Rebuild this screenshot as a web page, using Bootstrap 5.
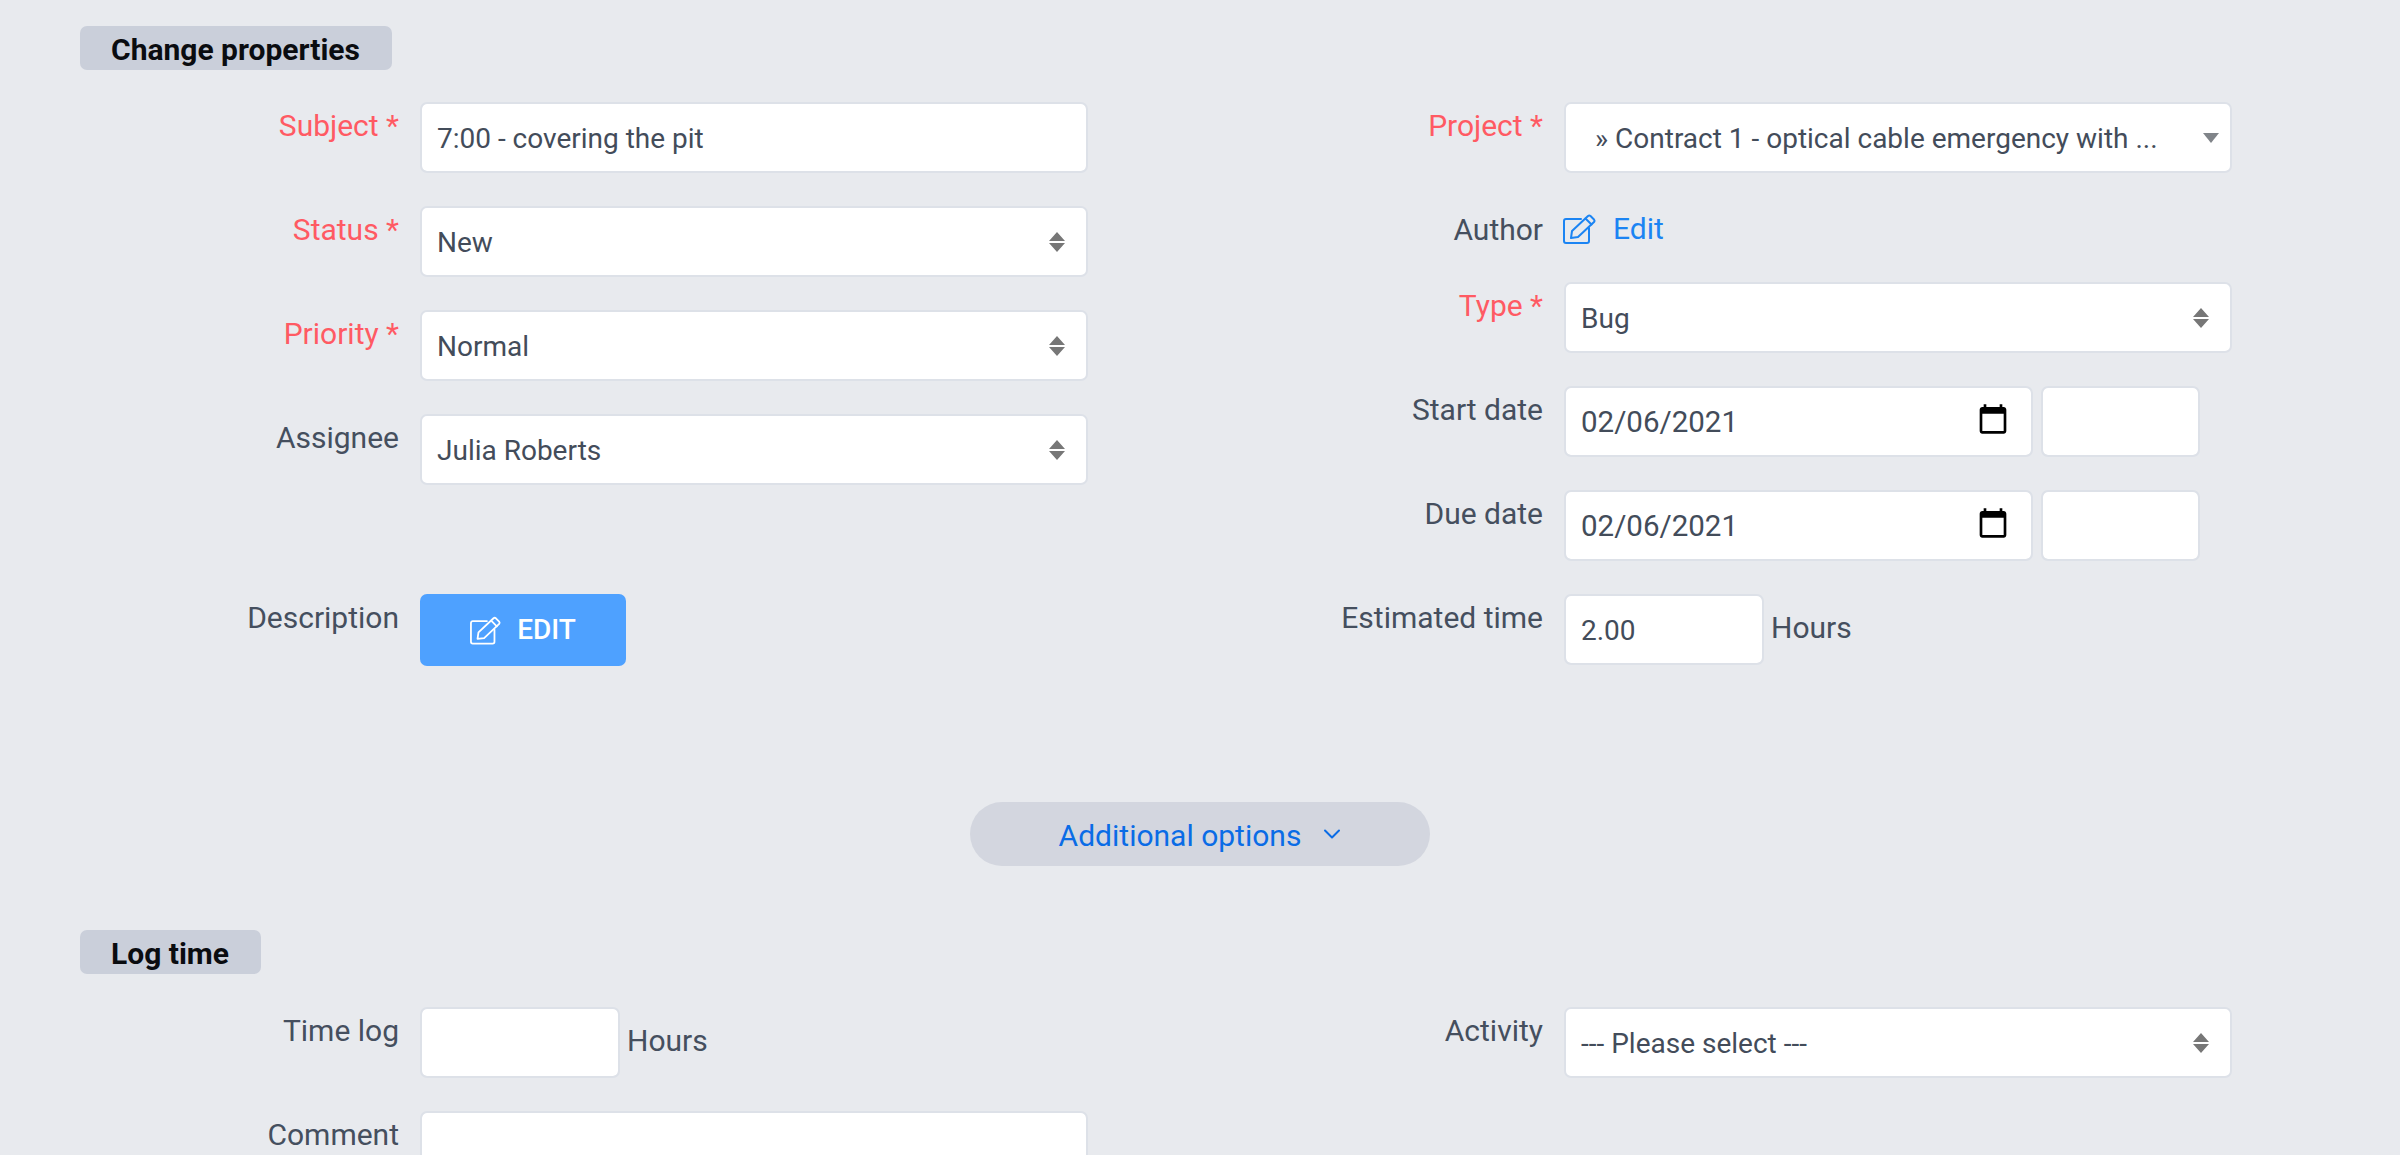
<!DOCTYPE html>
<html lang="en">
<head>
<meta charset="utf-8">
<title>Change properties</title>
<link href="https://cdn.jsdelivr.net/npm/bootstrap@5.3.0/dist/css/bootstrap.min.css" rel="stylesheet">
<style>
html,body{height:1155px;overflow:hidden;}
body{background:#e8eaee;font-family:Roboto,"Liberation Sans",sans-serif;font-size:30px;color:#454f5e;}
.page-wrap{padding:26px 32px 0 80px;height:1155px;overflow:hidden;}
.sec-tag{display:inline-block;background:#cacfda;color:#0a0c10;font-weight:700;font-size:30px;line-height:48px;height:44px;padding:0 32px 0 31px;border-radius:7px;}
.sec-head{margin-bottom:32px;height:44px;}
.frow{display:flex;margin-bottom:33px;}
.flabel{width:319px;margin-right:21px;text-align:right;height:43px;line-height:48px;flex:none;}
.flabel.req{color:#ff5a63;}
.fctl.form-control,.fctl.form-select{height:71px;border:2px solid #dde1e8;border-radius:7px;font-size:28px;color:#434c5a;padding:2px 15px 0;line-height:65px;}
.w-main{width:668px;flex:none;}
.w-date{width:469px;flex:none;margin-right:8px;}
.w-time{width:159px;flex:none;}
.w-hours{width:200px;flex:none;}
.fctl.form-select{background-image:url("data:image/svg+xml,%3Csvg xmlns='http://www.w3.org/2000/svg' width='16' height='20'%3E%3Cpath fill='%23777' d='M8 0l8 9H0zM8 20L0 11h16z'/%3E%3C/svg%3E");background-size:16px 20px;background-position:right 21px center;padding-right:48px;}
.fctl.form-select.sel-single{background-image:url("data:image/svg+xml,%3Csvg xmlns='http://www.w3.org/2000/svg' width='16' height='10'%3E%3Cpath fill='%23808489' d='M0 0h16L8 10z'/%3E%3C/svg%3E");background-size:16px 10px;background-position:right 11px center;padding-left:29px;text-overflow:ellipsis;}
.unit{margin-left:7px;line-height:67px;}
.edit-link{color:#1b84f3;text-decoration:none;display:flex;align-items:center;height:43px;line-height:48px;gap:16px;}
.edit-link span{padding-top:2px;}
.edit-link svg{display:block;margin-left:-1px;margin-top:2px;}
.btn-edit{display:flex;align-items:center;justify-content:center;gap:15px;width:206px;height:72px;background:#4ea1ff;color:#fff;font-weight:500;font-size:28px;border:none;border-radius:7px;padding:0;}
.btn-edit:hover{background:#4ea1ff;color:#fff;}
.gap-top{margin-top:109px;}
.more-wrap{display:flex;justify-content:center;margin:136px 0 0;width:2240px;}
.more-pill{display:flex;align-items:center;justify-content:center;gap:22px;width:460px;height:64px;border-radius:32px;background:#d3d6df;color:#0a6ce6;font-size:30px;text-decoration:none;}
.more-pill span{padding-top:2px;}
.sec-two{margin-top:64px;margin-bottom:33px;}
input[type=date].fctl{font-family:Roboto,"Liberation Sans",sans-serif;font-size:29.500px;}
input[type=date]::-webkit-calendar-picker-indicator{width:34px;height:34px;padding:0;margin:-5px 6px 0 0;}
</style>
</head>
<body>
<div class="page-wrap">
  <div class="sec-head"><span class="sec-tag">Change properties</span></div>
  <div class="row g-0">
    <div class="col-6">
      <div class="frow"><label class="flabel req">Subject *</label><input class="form-control fctl w-main" type="text" value="7:00 - covering the pit"></div>
      <div class="frow"><label class="flabel req">Status *</label><select class="form-select fctl w-main"><option>New</option></select></div>
      <div class="frow"><label class="flabel req">Priority *</label><select class="form-select fctl w-main"><option>Normal</option></select></div>
      <div class="frow"><label class="flabel">Assignee</label><select class="form-select fctl w-main"><option>Julia Roberts</option></select></div>
      <div class="frow gap-top mb-0"><label class="flabel">Description</label>
        <button type="button" class="btn btn-edit">
          <svg width="32" height="29" viewBox="0 0 34 30" fill="none" stroke="#fff" stroke-width="1.900" stroke-linejoin="round" stroke-linecap="round"><path d="M18 5H3a2 2 0 0 0-2 2v20a2 2 0 0 0 2 2h21a2 2 0 0 0 2-2V14"/><path d="M8 24l1-7L25 2a2 2 0 0 1 2.500 0l3.500 3.500a2 2 0 0 1 0 2.500L15 23z"/><path d="M22.500 4.500l6 6"/></svg>
          <span>EDIT</span>
        </button>
      </div>
    </div>
    <div class="col-6">
      <div class="frow"><label class="flabel req">Project *</label><select class="form-select fctl w-main sel-single"><option>» Contract 1 - optical cable emergency with ...</option></select></div>
      <div class="frow"><label class="flabel">Author</label><a href="#" class="edit-link"><svg width="34" height="30" viewBox="0 0 34 30" fill="none" stroke="#1b84f3" stroke-width="2" stroke-linejoin="round" stroke-linecap="round"><path d="M18 5H3a2 2 0 0 0-2 2v20a2 2 0 0 0 2 2h21a2 2 0 0 0 2-2V14"/><path d="M8 24l1-7L25 2a2 2 0 0 1 2.500 0l3.500 3.500a2 2 0 0 1 0 2.500L15 23z"/><path d="M22.500 4.500l6 6"/></svg><span>Edit</span></a></div>
      <div class="frow"><label class="flabel req">Type *</label><select class="form-select fctl w-main"><option>Bug</option></select></div>
      <div class="frow"><label class="flabel">Start date</label><input class="form-control fctl w-date" type="date" value="2021-02-06"><input class="form-control fctl w-time" type="text"></div>
      <div class="frow"><label class="flabel">Due date</label><input class="form-control fctl w-date" type="date" value="2021-02-06"><input class="form-control fctl w-time" type="text"></div>
      <div class="frow mb-0"><label class="flabel">Estimated time</label><input class="form-control fctl w-hours" type="text" value="2.00"><span class="unit">Hours</span></div>
    </div>
  </div>
  <div class="more-wrap"><a href="#" class="more-pill"><span>Additional options</span><svg width="18" height="10" viewBox="0 0 18 10" fill="none" stroke="#0a6ce6" stroke-width="2" stroke-linecap="round" stroke-linejoin="round"><path d="M2 1.500l7 7 7-7"/></svg></a></div>
  <div class="sec-two sec-head"><span class="sec-tag">Log time</span></div>
  <div class="row g-0">
    <div class="col-6">
      <div class="frow"><label class="flabel">Time log</label><input class="form-control fctl w-hours" type="text"><span class="unit">Hours</span></div>
      <div class="frow"><label class="flabel">Comment</label><input class="form-control fctl w-main" type="text"></div>
    </div>
    <div class="col-6">
      <div class="frow"><label class="flabel">Activity</label><select class="form-select fctl w-main"><option>--- Please select ---</option></select></div>
    </div>
  </div>
</div>
<script src="https://cdn.jsdelivr.net/npm/bootstrap@5.3.0/dist/js/bootstrap.bundle.min.js"></script>
</body>
</html>
